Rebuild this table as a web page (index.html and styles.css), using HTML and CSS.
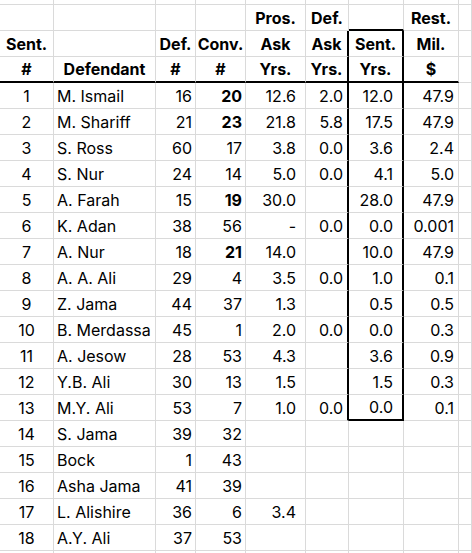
FILE: index.html
```html
<!DOCTYPE html>
<html>
<head>
<meta charset="utf-8">
<link rel="stylesheet" href="styles.css">
</head>
<body>
<table class="sheet">
  <colgroup>
    <col class="c-sent"><col class="c-name"><col class="c-def"><col class="c-conv"><col class="c-pros"><col class="c-dask"><col class="c-syrs"><col class="c-rest"><col class="c-extra">
  </colgroup>
  <tbody>
    <tr class="stub"><td></td><td></td><td></td><td></td><td></td><td></td><td></td><td></td><td></td></tr>
    <tr class="head">
      <td></td><td></td><td></td><td></td><td>Pros.</td><td>Def.</td><td class="box-top"></td><td>Rest.</td><td></td>
    </tr>
    <tr class="head">
      <td>Sent.</td><td></td><td>Def.</td><td>Conv.</td><td>Ask</td><td class="box-l">Ask</td><td class="box-r">Sent.</td><td>Mil.</td><td></td>
    </tr>
    <tr class="head rule">
      <td>#</td><td>Defendant</td><td>#</td><td>#</td><td>Yrs.</td><td class="box-l">Yrs.</td><td class="box-r">Yrs.</td><td>$</td><td></td>
    </tr>
    <tr><td class="n">1</td><td class="nm">M. Ismail</td><td class="d">16</td><td class="v b">20</td><td class="p">12.6</td><td class="a box-l">2.0</td><td class="s box-r">12.0</td><td class="r">47.9</td><td></td></tr>
    <tr><td class="n">2</td><td class="nm">M. Shariff</td><td class="d">21</td><td class="v b">23</td><td class="p">21.8</td><td class="a box-l">5.8</td><td class="s box-r">17.5</td><td class="r">47.9</td><td></td></tr>
    <tr><td class="n">3</td><td class="nm">S. Ross</td><td class="d">60</td><td class="v">17</td><td class="p">3.8</td><td class="a box-l">0.0</td><td class="s box-r">3.6</td><td class="r">2.4</td><td></td></tr>
    <tr><td class="n">4</td><td class="nm">S. Nur</td><td class="d">24</td><td class="v">14</td><td class="p">5.0</td><td class="a box-l">0.0</td><td class="s box-r">4.1</td><td class="r">5.0</td><td></td></tr>
    <tr><td class="n">5</td><td class="nm">A. Farah</td><td class="d">15</td><td class="v b">19</td><td class="p">30.0</td><td class="a box-l"></td><td class="s box-r">28.0</td><td class="r">47.9</td><td></td></tr>
    <tr><td class="n">6</td><td class="nm">K. Adan</td><td class="d">38</td><td class="v">56</td><td class="p">-</td><td class="a box-l">0.0</td><td class="s box-r">0.0</td><td class="r">0.001</td><td></td></tr>
    <tr><td class="n">7</td><td class="nm">A. Nur</td><td class="d">18</td><td class="v b">21</td><td class="p">14.0</td><td class="a box-l"></td><td class="s box-r">10.0</td><td class="r">47.9</td><td></td></tr>
    <tr><td class="n">8</td><td class="nm">A. A. Ali</td><td class="d">29</td><td class="v">4</td><td class="p">3.5</td><td class="a box-l">0.0</td><td class="s box-r">1.0</td><td class="r">0.1</td><td></td></tr>
    <tr><td class="n">9</td><td class="nm">Z. Jama</td><td class="d">44</td><td class="v">37</td><td class="p">1.3</td><td class="a box-l"></td><td class="s box-r">0.5</td><td class="r">0.5</td><td></td></tr>
    <tr><td class="n">10</td><td class="nm">B. Merdassa</td><td class="d">45</td><td class="v">1</td><td class="p">2.0</td><td class="a box-l">0.0</td><td class="s box-r">0.0</td><td class="r">0.3</td><td></td></tr>
    <tr><td class="n">11</td><td class="nm">A. Jesow</td><td class="d">28</td><td class="v">53</td><td class="p">4.3</td><td class="a box-l"></td><td class="s box-r">3.6</td><td class="r">0.9</td><td></td></tr>
    <tr><td class="n">12</td><td class="nm">Y.B. Ali</td><td class="d">30</td><td class="v">13</td><td class="p">1.5</td><td class="a box-l"></td><td class="s box-r">1.5</td><td class="r">0.3</td><td></td></tr>
    <tr><td class="n">13</td><td class="nm">M.Y. Ali</td><td class="d">53</td><td class="v">7</td><td class="p">1.0</td><td class="a box-l">0.0</td><td class="s box-r box-bottom">0.0</td><td class="r">0.1</td><td></td></tr>
    <tr><td class="n">14</td><td class="nm">S. Jama</td><td class="d">39</td><td class="v">32</td><td class="p"></td><td class="a"></td><td class="s"></td><td class="r"></td><td></td></tr>
    <tr><td class="n">15</td><td class="nm">Bock</td><td class="d">1</td><td class="v">43</td><td class="p"></td><td class="a"></td><td class="s"></td><td class="r"></td><td></td></tr>
    <tr><td class="n">16</td><td class="nm">Asha Jama</td><td class="d">41</td><td class="v">39</td><td class="p"></td><td class="a"></td><td class="s"></td><td class="r"></td><td></td></tr>
    <tr><td class="n">17</td><td class="nm">L. Alishire</td><td class="d">36</td><td class="v">6</td><td class="p">3.4</td><td class="a"></td><td class="s"></td><td class="r"></td><td></td></tr>
    <tr><td class="n">18</td><td class="nm">A.Y. Ali</td><td class="d">37</td><td class="v">53</td><td class="p"></td><td class="a"></td><td class="s"></td><td class="r"></td><td></td></tr>
    <tr class="tail"><td></td><td></td><td></td><td></td><td></td><td></td><td></td><td></td><td></td></tr>
  </tbody>
</table>
</body>
</html>
```

FILE: styles.css
```css
html, body {
  margin: 0;
  padding: 0;
  background: #ffffff;
  overflow: hidden;
}

.sheet {
  table-layout: fixed;
  border-collapse: separate;
  border-spacing: 0;
  width: 472px;
  font-family: Inter, "Noto Sans", sans-serif;
  font-size: 16px;
  color: #000000;
}

.c-sent { width: 54px; }
.c-name { width: 102px; }
.c-def { width: 40px; }
.c-conv { width: 50px; }
.c-pros { width: 60px; }
.c-dask { width: 43px; }
.c-syrs { width: 55px; }
.c-rest { width: 55px; }
.c-extra { width: 13px; }

.sheet td {
  box-sizing: border-box;
  height: 26px;
  padding: 0 3px 3px 3px;
  border-right: 1px solid #dadada;
  border-bottom: 1px solid #dadada;
  vertical-align: bottom;
  line-height: 18px;
  white-space: nowrap;
  overflow: hidden;
}

.sheet td:last-child { padding: 0; }

.sheet tr { height: 26px; }
.sheet tr.stub { height: 5px; }
.sheet tr.stub td { height: 5px; padding: 0; }

.head td {
  font-weight: 700;
  text-align: center;
  padding-left: 0;
  padding-right: 0;
}

.rule td { border-bottom: 2px solid #000000; }
.rule td:last-child { border-bottom: 1px solid #dadada; }

.box-top { border-bottom: 2px solid #000000 !important; }
.box-l { border-right: 2px solid #000000 !important; }
.box-r { border-right: 2px solid #000000 !important; }
.box-bottom { border-bottom: 2px solid #000000 !important; }

.n { text-align: center; }
.nm { text-align: left; padding-left: 3px; }
.d { text-align: right; padding-right: 3px; }
.v { text-align: right; padding-right: 4px; }
.b { font-weight: 700; }
.p { text-align: right; padding-right: 9px !important; }
.a { text-align: right; padding-right: 4px !important; }
.s { text-align: right; padding-right: 9px !important; }
.r { text-align: right; padding-right: 4px !important; }
```
